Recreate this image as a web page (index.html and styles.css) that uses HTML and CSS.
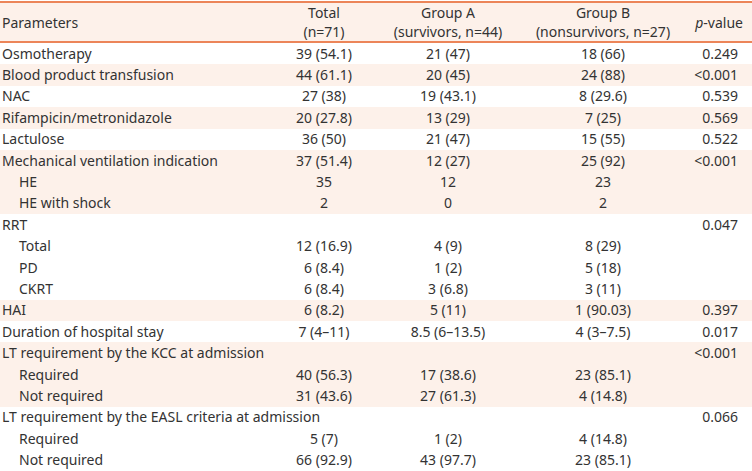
FILE: index.html
```html
<!DOCTYPE html>
<html lang="en">
<head>
<meta charset="utf-8">
<title>Table</title>
<link rel="stylesheet" href="styles.css">
</head>
<body>
<table class="data">
  <colgroup>
    <col class="c-param"><col class="c-total"><col class="c-a"><col class="c-b"><col class="c-p">
  </colgroup>
  <thead>
    <tr>
      <th class="param">Parameters</th>
      <th>Total<br>(n=71)</th>
      <th>Group A<br>(survivors, n=44)</th>
      <th>Group B<br>(nonsurvivors, n=27)</th>
      <th class="pv"><i>p</i>-value</th>
    </tr>
  </thead>
  <tbody>
    <tr><td class="param">Osmotherapy</td><td>39 (54.1)</td><td>21 (47)</td><td>18 (66)</td><td class="pv">0.249</td></tr>
  </tbody>
  <tbody class="shade">
    <tr><td class="param">Blood product transfusion</td><td>44 (61.1)</td><td>20 (45)</td><td>24 (88)</td><td class="pv">&lt;0.001</td></tr>
  </tbody>
  <tbody>
    <tr><td class="param">NAC</td><td>27 (38)</td><td>19 (43.1)</td><td>8 (29.6)</td><td class="pv">0.539</td></tr>
  </tbody>
  <tbody class="shade">
    <tr><td class="param">Rifampicin/metronidazole</td><td>20 (27.8)</td><td>13 (29)</td><td>7 (25)</td><td class="pv">0.569</td></tr>
  </tbody>
  <tbody>
    <tr><td class="param">Lactulose</td><td>36 (50)</td><td>21 (47)</td><td>15 (55)</td><td class="pv">0.522</td></tr>
  </tbody>
  <tbody class="shade">
    <tr><td class="param">Mechanical ventilation indication</td><td>37 (51.4)</td><td>12 (27)</td><td>25 (92)</td><td class="pv">&lt;0.001</td></tr>
    <tr><td class="param sub">HE</td><td>35</td><td>12</td><td>23</td><td class="pv"></td></tr>
    <tr><td class="param sub">HE with shock</td><td>2</td><td>0</td><td>2</td><td class="pv"></td></tr>
  </tbody>
  <tbody>
    <tr><td class="param">RRT</td><td></td><td></td><td></td><td class="pv">0.047</td></tr>
    <tr><td class="param sub">Total</td><td>12 (16.9)</td><td>4 (9)</td><td>8 (29)</td><td class="pv"></td></tr>
    <tr><td class="param sub">PD</td><td>6 (8.4)</td><td>1 (2)</td><td>5 (18)</td><td class="pv"></td></tr>
    <tr><td class="param sub">CKRT</td><td>6 (8.4)</td><td>3 (6.8)</td><td>3 (11)</td><td class="pv"></td></tr>
  </tbody>
  <tbody class="shade">
    <tr><td class="param">HAI</td><td>6 (8.2)</td><td>5 (11)</td><td>1 (90.03)</td><td class="pv">0.397</td></tr>
  </tbody>
  <tbody>
    <tr><td class="param">Duration of hospital stay</td><td>7 (4–11)</td><td>8.5 (6–13.5)</td><td>4 (3–7.5)</td><td class="pv">0.017</td></tr>
  </tbody>
  <tbody class="shade">
    <tr><td class="param">LT requirement by the KCC at admission</td><td></td><td></td><td></td><td class="pv">&lt;0.001</td></tr>
    <tr><td class="param sub">Required</td><td>40 (56.3)</td><td>17 (38.6)</td><td>23 (85.1)</td><td class="pv"></td></tr>
    <tr><td class="param sub">Not required</td><td>31 (43.6)</td><td>27 (61.3)</td><td>4 (14.8)</td><td class="pv"></td></tr>
  </tbody>
  <tbody class="last">
    <tr><td class="param">LT requirement by the EASL criteria at admission</td><td></td><td></td><td></td><td class="pv">0.066</td></tr>
    <tr><td class="param sub">Required</td><td>5 (7)</td><td>1 (2)</td><td>4 (14.8)</td><td class="pv"></td></tr>
    <tr><td class="param sub">Not required</td><td>66 (92.9)</td><td>43 (97.7)</td><td>23 (85.1)</td><td class="pv"></td></tr>
  </tbody>
</table>
</body>
</html>
```

FILE: styles.css
```css
html, body {
  margin: 0;
  padding: 0;
  background: #ffffff;
}

body {
  font-family: "Noto Sans", "Open Sans", sans-serif;
  font-size: 14px;
  color: #333333;
}

.data {
  width: 752px;
  border-collapse: collapse;
  table-layout: fixed;
  margin-top: 1px;
}

.c-param { width: 268px; }
.c-total { width: 112px; }
.c-a { width: 136px; }
.c-b { width: 174px; }
.c-p { width: 62px; }

.data thead tr {
  background: #fdf1ea;
  border-top: 2px solid #ec8559;
  border-bottom: 2px solid #ec8559;
}

.data th {
  font-weight: normal;
  height: 38px;
  padding: 0;
  line-height: 19px;
  text-align: center;
  vertical-align: middle;
  white-space: nowrap;
}

.data td {
  height: 21.4px;
  padding: 0;
  line-height: 20px;
  text-align: center;
  vertical-align: middle;
  white-space: nowrap;
}

.data .param {
  text-align: left;
  padding-left: 2px;
}

.data .sub {
  padding-left: 19px;
}

.data th.pv {
  text-align: right;
  padding-right: 9px;
}

.data td.pv {
  text-align: right;
  padding-right: 14px;
}

.data tbody.shade {
  background: #fdf1ea;
}

.data tbody.last {
  border-bottom: 2px solid #ec8559;
}
```
